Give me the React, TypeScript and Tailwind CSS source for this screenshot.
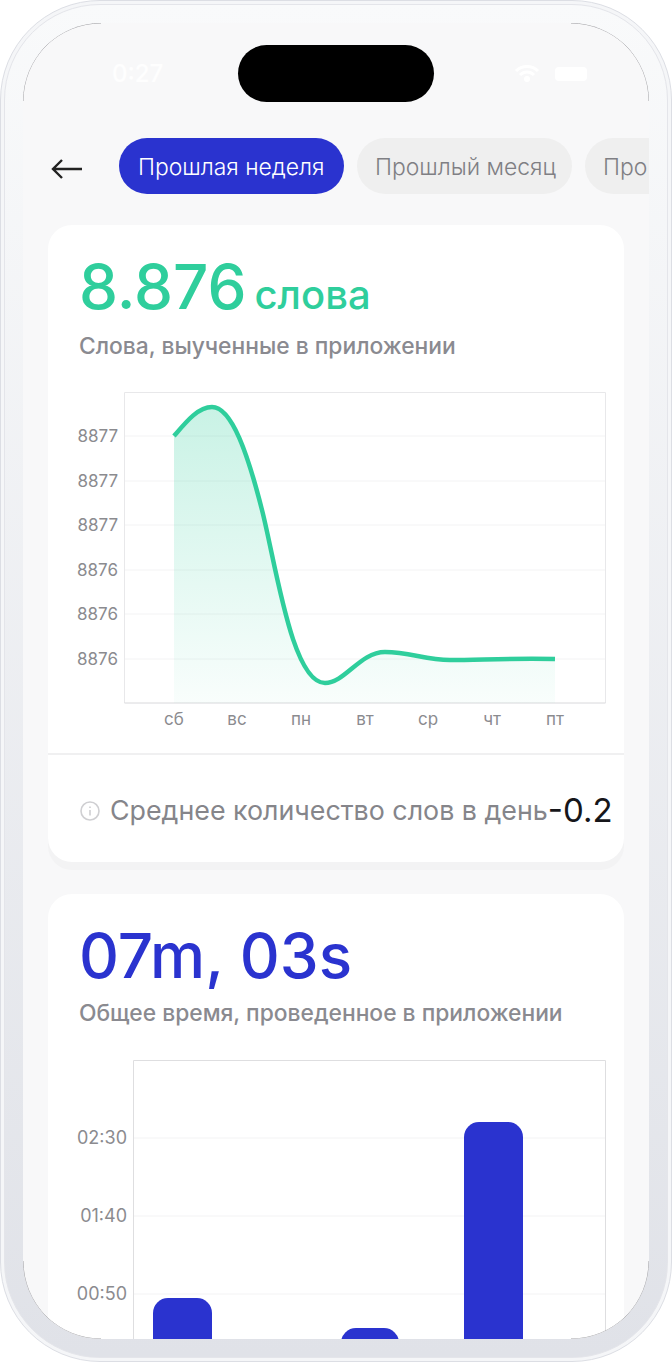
const font = { fontFamily: "Inter, 'Noto Sans', sans-serif" };

const wordTicks = [
  { y: 436, label: "8877" },
  { y: 481, label: "8877" },
  { y: 525, label: "8877" },
  { y: 570, label: "8876" },
  { y: 614, label: "8876" },
  { y: 659, label: "8876" },
];
const days = [
  { x: 174, label: "сб" },
  { x: 237, label: "вс" },
  { x: 301, label: "пн" },
  { x: 365, label: "вт" },
  { x: 428, label: "ср" },
  { x: 492, label: "чт" },
  { x: 555, label: "пт" },
];
const timeTicks = [
  { y: 1138, label: "02:30" },
  { y: 1216, label: "01:40" },
  { y: 1294, label: "00:50" },
];
const bars = [
  { x: 153, w: 59, top: 1298 },
  { x: 341, w: 58, top: 1328 },
  { x: 464, w: 59, top: 1122 },
];

const curve =
  "M174 436 C186 422 198 407 212 407 C232 407 248 455 262 510 C276 565 292 683 325 683 C345 683 360 652 385 652 C410 652 425 660 450 660 C480 660 510 658 555 659";

function WordsChart() {
  return (
    <svg width="576" height="373" viewBox="48 380 576 373" className="block">
      <defs>
        <linearGradient id="area" x1="0" y1="0" x2="0" y2="1">
          <stop offset="0" stopColor="#2fce9c" stopOpacity="0.26" />
          <stop offset="1" stopColor="#2fce9c" stopOpacity="0.03" />
        </linearGradient>
      </defs>
      {wordTicks.map((t) => (
        <line key={t.y} x1="125" x2="605" y1={t.y} y2={t.y} stroke="#f3f3f4" />
      ))}
      <path d="M605.5 703 V392.5 H124.5 V703" fill="none" stroke="#e8e8ea" />
      <path d="M124.5 703 H605.5" stroke="#d8d8db" />
      <path d={`${curve} V703 H174 Z`} fill="url(#area)" />
      <path d={curve} fill="none" stroke="#2fce9c" strokeWidth="4.5" />
      {wordTicks.map((t, i) => (
        <text key={i} x="118" y={t.y + 6} textAnchor="end" fontSize="17" fill="#8b8b8f" style={font}>
          {t.label}
        </text>
      ))}
      {days.map((d) => (
        <text key={d.x} x={d.x} y="725" textAnchor="middle" fontSize="17" fill="#8b8b8f" style={font}>
          {d.label}
        </text>
      ))}
    </svg>
  );
}

function TimeChart() {
  return (
    <svg width="576" height="300" viewBox="48 1050 576 300" className="block">
      {timeTicks.map((t) => (
        <line key={t.y} x1="134" x2="605" y1={t.y} y2={t.y} stroke="#f3f3f4" />
      ))}
      <path d="M133.5 1350 V1060.5 H605.5 V1350" fill="none" stroke="#dedee0" />
      {bars.map((b) => (
        <rect key={b.x} x={b.x} y={b.top} width={b.w} height="320" rx="15" fill="#2a33cf" />
      ))}
      {timeTicks.map((t) => (
        <text key={t.y} x="127" y={t.y + 6} textAnchor="end" fontSize="18" fill="#8b8b8f" style={font}>
          {t.label}
        </text>
      ))}
    </svg>
  );
}

export default function App() {
  return (
    <div className="h-[1362px] w-[672px] overflow-hidden bg-white" style={font}>
      <div className="h-[1362px] w-[672px] rounded-[100px] border border-[#dcdee4] bg-[#f5f6f8] p-[3px]">
        <div className="h-[1354px] w-[664px] rounded-[96px] border border-[#e4e5ea] bg-gradient-to-b from-[#f9fafb] to-[#e0e2e8] p-[18px]">
          <div className="relative h-[1316px] w-[626px] overflow-hidden rounded-[78px] bg-[#f8f8f9]">
            {/* status bar, sits on top of the scrolled page */}
            <div className="absolute left-[89px] top-[36px] text-[24px] font-medium leading-[30px] text-white/80">
              0:27
            </div>
            <div className="absolute left-[215px] top-[22px] h-[57px] w-[196px] rounded-full bg-black" />
            <svg className="absolute left-[491px] top-[41px]" width="26" height="20" viewBox="0 0 26 20" fill="none">
              <path d="M2 7 C8 1 18 1 24 7 M6 11 C10 7 16 7 20 11" stroke="#fff" strokeWidth="3" />
              <circle cx="13" cy="15" r="3" fill="#fff" />
            </svg>
            <div className="absolute left-[532px] top-[44px] h-[14px] w-[32px] rounded-[4px] bg-white" />

            <div className="flex flex-col pt-[115px]">
              <div className="flex h-[56px] items-center overflow-hidden pl-[28px]">
                <svg width="32" height="22" viewBox="0 0 32 22" fill="none" className="mr-[36px] mt-[5px] shrink-0">
                  <path d="M31 11 H2 M11 2 L2 11 L11 20" stroke="#222" strokeWidth="2.4" />
                </svg>
                <div className="flex h-[56px] w-[225px] shrink-0 items-center rounded-full bg-[#2a33cf] pl-[19px] pt-[3px] text-[22.9px] font-light text-white">
                  Прошлая неделя
                </div>
                <div className="ml-[13px] flex h-[56px] w-[215px] shrink-0 items-center rounded-full bg-[#efefef] pl-[18px] pt-[3px] text-[22.9px] font-light text-[#7f7f84]">
                  Прошлый месяц
                </div>
                <div className="ml-[13px] flex h-[56px] w-[120px] shrink-0 items-center rounded-full bg-[#efefef] pl-[18px] pt-[3px] text-[22.9px] font-light text-[#7f7f84]">
                  Про
                </div>
              </div>

              <div className="mx-[25px] mt-[31px] h-[637px] rounded-[24px] bg-white shadow-[0_8px_0_#f3f3f4]">
                <div className="flex h-[155px] flex-col pl-[31px] pt-[26px]">
                  <div className="flex items-baseline text-[#2fce9c]">
                    <span className="text-[62px] font-medium leading-[72px]">8.876</span>
                    <span className="ml-[8px] text-[40px] font-medium">слова</span>
                  </div>
                  <div className="mt-[6px] text-[22.8px] font-medium leading-[30px] text-[#8a8a90]">
                    Слова, выученные в приложении
                  </div>
                </div>
                <WordsChart />
                <div className="border-t-2 border-[#f0f0f1]" />
                <div className="flex h-[107px] items-center pl-[32px] pt-[4px]">
                  <svg width="20" height="20" viewBox="0 0 20 20" fill="none" className="shrink-0">
                    <circle cx="10" cy="10" r="9" stroke="#cfcfd2" strokeWidth="1.6" />
                    <path d="M10 9 V14.5 M10 5.5 V7" stroke="#cfcfd2" strokeWidth="1.6" />
                  </svg>
                  <span className="ml-[10px] text-[26.8px] text-[#85858a]">Среднее количество слов в день</span>
                  <span className="text-[33px] text-[#16161a]">-0.2</span>
                </div>
              </div>

              <div className="mx-[25px] mt-[32px] rounded-[24px] bg-white">
                <div className="flex h-[156px] flex-col pl-[31px] pt-[26px]">
                  <div className="text-[62px] font-medium leading-[72px] text-[#2a33cf]">07m, 03s</div>
                  <div className="mt-[6px] text-[22.8px] font-medium leading-[30px] text-[#8a8a90]">
                    Общее время, проведенное в приложении
                  </div>
                </div>
                <TimeChart />
              </div>
            </div>

            {/* hairline that only shows along the screen corners */}
            <svg className="absolute inset-0" width="626" height="1316" viewBox="0 0 626 1316" fill="none">
              <path
                d="M0 78 A78 78 0 0 1 78 0 M548 0 A78 78 0 0 1 626 78 M626 1238 A78 78 0 0 1 548 1316 M78 1316 A78 78 0 0 1 0 1238"
                stroke="#a4a4a8"
                strokeWidth="1"
              />
            </svg>
          </div>
        </div>
      </div>
    </div>
  );
}
